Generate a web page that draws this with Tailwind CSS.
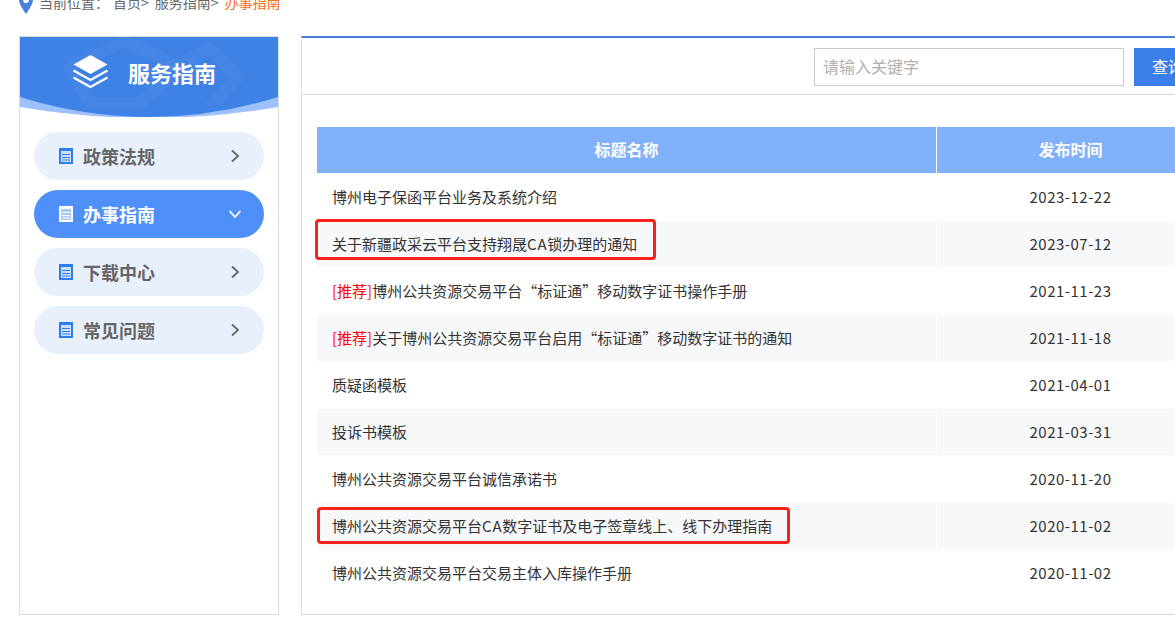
<!DOCTYPE html>
<html lang="zh-CN">
<head>
<meta charset="utf-8">
<script src="https://cdn.jsdelivr.net/npm/@tailwindcss/browser@4"></script>
</head>
<body class="bg-white">
<div class="relative w-[1175px] h-[620px] overflow-hidden font-['Noto_Sans_CJK_SC','Noto_Sans',sans-serif] text-[#333]">
  <!-- breadcrumb -->
  <div class="flex items-center h-[22px] mt-[-9px] pl-[19px] text-[14px] leading-[22px] text-[#666]">
    <svg class="w-[14px] h-[21px] mt-[2px] mr-[6px]" viewBox="0 0 14 21"><path fill="#4a80dc" fill-rule="evenodd" d="M7 0a7 7 0 0 1 7 7c0 4-4 9.500-7 14C4 16.500 0 11 0 7a7 7 0 0 1 7-7zm0 4.500a2.800 2.800 0 1 0 0 5.600 2.800 2.800 0 0 0 0-5.600z"/></svg>
    <span class="mr-[4px]">当前位置：</span><span>首页&gt;</span><span class="ml-[6px]">服务指南&gt;</span><span class="ml-[6px] text-[#ff6a13]">办事指南</span>
  </div>
  <div class="flex items-start mt-[24px] pl-[19px] gap-[22px]">
    <!-- sidebar -->
    <aside class="w-[260px] h-[579px] mt-[-1px] shrink-0 border border-[#dcdcdc]">
      <div class="relative h-[80px] overflow-hidden">
        <svg class="absolute inset-0 w-full h-full" viewBox="0 0 258 80" preserveAspectRatio="none">
          <path fill="#9cc1fc" d="M0 60H258V70Q129 92 0 70Z"/>
          <path fill="#3f82e6" d="M0 0H258V60Q129 100 0 60Z"/>
          <g fill="none" stroke="#fff" stroke-opacity=".03" stroke-width="12" stroke-linejoin="round">
            <path d="M50 30L105 4L160 30L120 66L70 66Z"/>
            <path d="M130 40L190 12L218 40L190 70"/>
          </g>
        </svg>
        <div class="relative flex items-center h-[70px] pl-[52px]">
          <svg class="w-[37px] h-[34px] mr-[19px]" viewBox="0 0 36 34">
            <path fill="#fff" d="M18 0L35 9.500L18 19L1 9.500Z"/>
            <path fill="none" stroke="#fff" stroke-width="2.200" d="M1 15.500L18 25L35 15.500M1 22.500L18 32L35 22.500"/>
          </svg>
          <span class="text-[22px] font-bold text-white">服务指南</span>
        </div>
      </div>
      <nav class="flex flex-col gap-[10px] px-[14px] pt-[15px]">
        <a class="flex items-center h-[48px] rounded-[24px] bg-[#e8f0fd] pl-[25px] pr-[24px] text-[18px] font-bold text-[#666]">
          <svg class="w-[14px] h-[16px] mr-[10px]" viewBox="0 0 14 16"><rect width="14" height="16" fill="#2e7ced"/><rect x="2" y="3" width="10" height="11" fill="#cfe0fb"/><path stroke="#2e7ced" d="M3 6.500H11M3 9.500H11M3 12H11"/></svg>
          <span class="flex-1">政策法规</span>
          <svg class="w-[10px] h-[14px]" viewBox="0 0 10 14"><path fill="none" stroke="#666" stroke-width="1.800" d="M2 1.500L8 7L2 12.500"/></svg>
        </a>
        <a class="flex items-center h-[48px] rounded-[24px] bg-[#4f8ffa] pl-[25px] pr-[22px] text-[18px] font-bold text-white">
          <svg class="w-[14px] h-[16px] mr-[10px]" viewBox="0 0 14 16"><rect width="14" height="16" fill="#fff"/><rect x="2" y="3" width="10" height="11" fill="#a9c9fb"/><path stroke="#fff" d="M3 6.500H11M3 9.500H11M3 12H11"/></svg>
          <span class="flex-1">办事指南</span>
          <svg class="w-[14px] h-[10px]" viewBox="0 0 14 10"><path fill="none" stroke="#fff" stroke-width="1.800" d="M1.500 2L7 8L12.500 2"/></svg>
        </a>
        <a class="flex items-center h-[48px] rounded-[24px] bg-[#e8f0fd] pl-[25px] pr-[24px] text-[18px] font-bold text-[#666]">
          <svg class="w-[14px] h-[16px] mr-[10px]" viewBox="0 0 14 16"><rect width="14" height="16" fill="#2e7ced"/><rect x="2" y="3" width="10" height="11" fill="#cfe0fb"/><path stroke="#2e7ced" d="M3 6.500H11M3 9.500H11M3 12H11"/></svg>
          <span class="flex-1">下载中心</span>
          <svg class="w-[10px] h-[14px]" viewBox="0 0 10 14"><path fill="none" stroke="#666" stroke-width="1.800" d="M2 1.500L8 7L2 12.500"/></svg>
        </a>
        <a class="flex items-center h-[48px] rounded-[24px] bg-[#e8f0fd] pl-[25px] pr-[24px] text-[18px] font-bold text-[#666]">
          <svg class="w-[14px] h-[16px] mr-[10px]" viewBox="0 0 14 16"><rect width="14" height="16" fill="#2e7ced"/><rect x="2" y="3" width="10" height="11" fill="#cfe0fb"/><path stroke="#2e7ced" d="M3 6.500H11M3 9.500H11M3 12H11"/></svg>
          <span class="flex-1">常见问题</span>
          <svg class="w-[10px] h-[14px]" viewBox="0 0 10 14"><path fill="none" stroke="#666" stroke-width="1.800" d="M2 1.500L8 7L2 12.500"/></svg>
        </a>
      </nav>
    </aside>
    <!-- main panel -->
    <main class="w-[920px] h-[579px] mt-[-1px] shrink-0 border border-[#dcdcdc] border-t-2 border-t-[#4a80dc]">
      <div class="flex items-center h-[57px] pl-[512px] pt-[1px] border-b border-[#dcdcdc]">
        <div class="flex items-center w-[310px] h-[38px] shrink-0 pl-[8px] pb-[2px] border border-[#ccc] text-[16px] text-[#b0b0b0]">请输入关键字</div>
        <div class="flex items-center w-[90px] h-[38px] shrink-0 ml-[10px] pl-[18px] pb-[2px] bg-[#3b7eea] text-[16px] text-white">查询</div>
      </div>
      <div class="ml-[15px] mt-[32px] grid grid-cols-[619px_267px] gap-x-[1px] gap-y-[1px] auto-rows-[46px] text-[15px] items-stretch">
        <div class="flex items-center justify-center pb-[2px] bg-[#82b1fb] text-[16px] font-bold text-white">标题名称</div>
        <div class="flex items-center justify-center pb-[2px] bg-[#82b1fb] text-[16px] font-bold text-white">发布时间</div>

        <div class="flex items-center pl-[15px]">博州电子保函平台业务及系统介绍</div>
        <div class="flex items-center justify-center tracking-[0.5px]">2023-12-22</div>

        <div class="flex items-center pl-[15px] bg-[#f7f8fa]"><span>关于新疆政采云平台支持翔晟<span class="tracking-[0.8px]">CA</span>锁办理的通知</span></div>
        <div class="flex items-center justify-center tracking-[0.5px] bg-[#f7f8fa]">2023-07-12</div>

        <div class="flex items-center pl-[15px]"><span><span class="text-[#f00]">[推荐]</span>博州公共资源交易平台“标证通”移动数字证书操作手册</span></div>
        <div class="flex items-center justify-center tracking-[0.5px]">2021-11-23</div>

        <div class="flex items-center pl-[15px] bg-[#f7f8fa]"><span><span class="text-[#f00]">[推荐]</span>关于博州公共资源交易平台启用“标证通”移动数字证书的通知</span></div>
        <div class="flex items-center justify-center tracking-[0.5px] bg-[#f7f8fa]">2021-11-18</div>

        <div class="flex items-center pl-[15px]">质疑函模板</div>
        <div class="flex items-center justify-center tracking-[0.5px]">2021-04-01</div>

        <div class="flex items-center pl-[15px] bg-[#f7f8fa]">投诉书模板</div>
        <div class="flex items-center justify-center tracking-[0.5px] bg-[#f7f8fa]">2021-03-31</div>

        <div class="flex items-center pl-[15px]">博州公共资源交易平台诚信承诺书</div>
        <div class="flex items-center justify-center tracking-[0.5px]">2020-11-20</div>

        <div class="flex items-center pl-[15px] bg-[#f7f8fa]"><span>博州公共资源交易平台<span class="tracking-[0.8px]">CA</span>数字证书及电子签章线上、线下办理指南</span></div>
        <div class="flex items-center justify-center tracking-[0.5px] bg-[#f7f8fa]">2020-11-02</div>

        <div class="flex items-center pl-[15px]">博州公共资源交易平台交易主体入库操作手册</div>
        <div class="flex items-center justify-center tracking-[0.5px]">2020-11-02</div>
      </div>
    </main>
  </div>
  <!-- red annotation boxes -->
  <div class="absolute left-[315px] top-[219px] w-[341px] h-[41px] border-[3px] border-[#f5231b] rounded-[4px]"></div>
  <div class="absolute left-[317px] top-[507px] w-[473px] h-[37px] border-[3px] border-[#f5231b] rounded-[4px]"></div>
</div>
</body>
</html>
